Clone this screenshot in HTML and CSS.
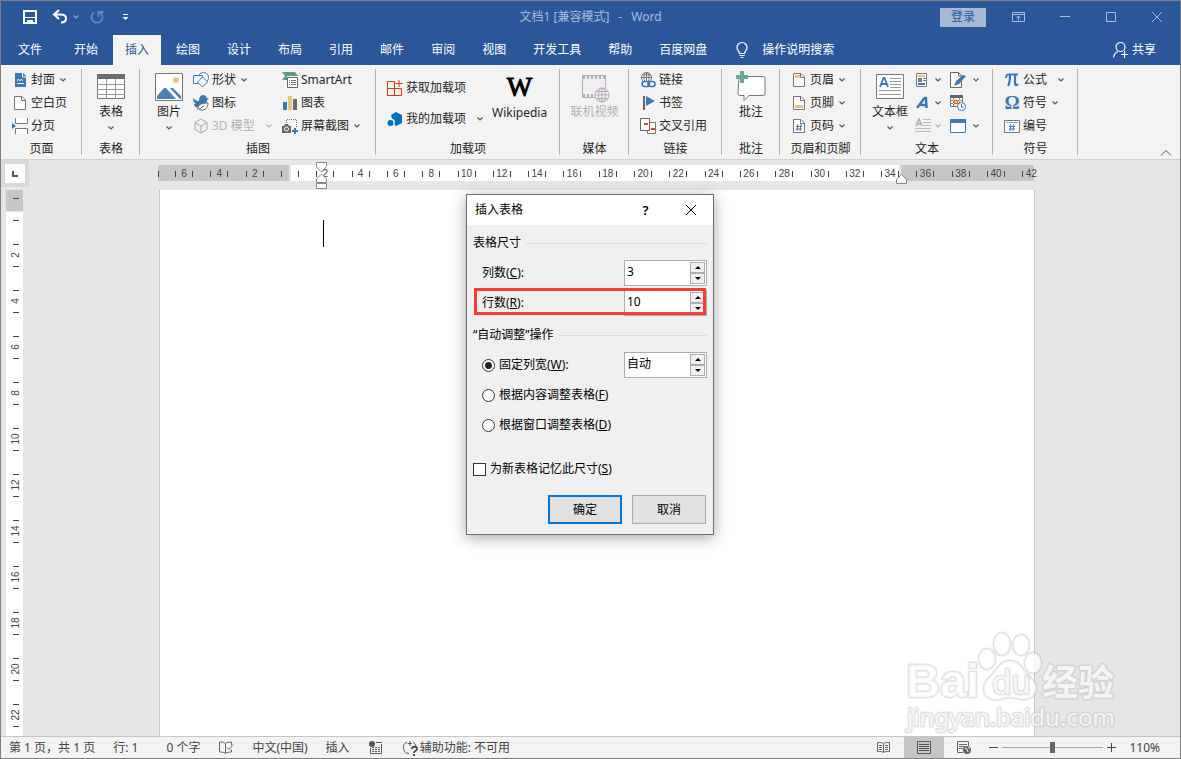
FILE: index.html
```html
<!DOCTYPE html>
<html lang="zh-CN">
<head>
    <meta charset="UTF-8">
    <meta name="viewport" content="width=device-width, initial-scale=1.0">
    <title>文档1 - Word</title>
    <link rel="stylesheet" href="styles.css">
</head>
<body>
    <svg class="defs" aria-hidden="true">
        <symbol id="chev" viewBox="0 0 8 8"><path d="M1.500 2.500l2.500 2.500 2.500-2.500" fill="none" stroke="currentColor" stroke-width="1.200"/></symbol>
        <symbol id="doc" viewBox="0 0 16 16"><path d="M2.500 1.500h7.500l3.500 3.500v9.500h-11z" fill="#fff" stroke="#777"/><path d="M9.500 1.500v4h4" fill="none" stroke="#777"/></symbol>
    </svg>

    <!-- Title bar -->
    <header class="titlebar">
        <div class="quick-access">
            <button aria-label="保存"><svg width="16" height="16"><path d="M2 2h12v12H2z" fill="none" stroke="#fff" stroke-width="2"/><path d="M3 8.500h10" stroke="#fff"/><path d="M5 11h6v4H9v-2H7v2H5z" fill="#fff"/></svg></button>
            <button aria-label="撤消" class="undo"><svg width="16" height="16"><path d="M7 1L2 5.500l5 4.500M2.500 5.500H9c3 0 5 1.500 5 4s-2 4-5 4" fill="none" stroke="#fff" stroke-width="2"/></svg><svg class="chev"><use href="#chev"/></svg></button>
            <button aria-label="恢复" class="redo"><svg width="16" height="16"><path d="M5 3.500A5.500 5.500 0 1 0 11 3.500M9.500 8V3h5" fill="none" stroke="#6384bb" stroke-width="2"/></svg></button>
            <button aria-label="自定义快速访问工具栏"><svg width="16" height="16"><path d="M5 5.500h5" stroke="#fff"/><path d="M4.500 8h6L7.500 11z" fill="#fff"/></svg></button>
        </div>
        <div class="doc-title"><span>文档1 [兼容模式]</span><span>-</span><span>Word</span></div>
        <div class="window-controls">
            <button class="signin">登录</button>
            <button aria-label="功能区显示选项"><svg width="14" height="12"><path d="M.5 1.500h12v9H.5zM.5 3.500h12M6.500 9.500v-4M4.500 7l2-2 2 2" fill="none" stroke="currentColor"/></svg></button>
            <button aria-label="最小化"><svg width="14" height="12"><path d="M2 5.500h10" stroke="currentColor"/></svg></button>
            <button aria-label="最大化"><svg width="14" height="12"><path d="M2.500 1.500h9v9h-9z" fill="none" stroke="currentColor"/></svg></button>
            <button aria-label="关闭"><svg width="14" height="12"><path d="M2 1l10 10M12 1L2 11" stroke="currentColor"/></svg></button>
        </div>
    </header>

    <!-- Tabs -->
    <nav class="tabs">
        <button class="tab file">文件</button>
        <button class="tab">开始</button>
        <button class="tab active">插入</button>
        <button class="tab">绘图</button>
        <button class="tab">设计</button>
        <button class="tab">布局</button>
        <button class="tab">引用</button>
        <button class="tab">邮件</button>
        <button class="tab">审阅</button>
        <button class="tab">视图</button>
        <button class="tab">开发工具</button>
        <button class="tab">帮助</button>
        <button class="tab">百度网盘</button>
        <button class="tab tell-me"><svg width="14" height="18"><path d="M4.500 12.500c0-2-2.500-3-2.500-6a4.800 4.800 0 0 1 10 0c0 3-2.500 4-2.500 6zM4.500 14.500h5M5.500 16.500h3" fill="none" stroke="#fff" stroke-width="1.200"/></svg>操作说明搜索</button>
        <button class="tab share"><svg width="18" height="18"><circle cx="8.500" cy="6" r="4.500" fill="none" stroke="#fff" stroke-width="1.200"/><path d="M1.500 16.500c.5-3 2-5 4.500-6M12.500 10v7M9 13.500h7" fill="none" stroke="#fff" stroke-width="1.200"/></svg>共享</button>
    </nav>

    <!-- Ribbon -->
    <section class="ribbon">
        <div class="group g-pages">
            <div class="group-body">
                <div class="col">
                    <button class="small"><svg class="icon"><path d="M3 1h8l3 3v11H3z" fill="#3d78b5"/><path d="M10.500 1v4H14" fill="none" stroke="#fff"/><path d="M5 8.500l1.500-1 1.500 1 1.500-1 1.500 1M5 11.500h7" fill="none" stroke="#fff"/></svg>封面<svg class="chev"><use href="#chev"/></svg></button>
                    <button class="small"><svg class="icon"><use href="#doc"/></svg>空白页</button>
                    <button class="small"><svg class="icon"><path d="M3.500 0v5.500h12V0M3.500 16v-5.500h12V16" fill="#fff" stroke="#777"/><path d="M0 5l4 3-4 3z" fill="#3d78b5"/></svg>分页</button>
                </div>
            </div>
            <div class="group-label">页面</div>
        </div>

        <div class="group g-table">
            <div class="group-body">
                <button class="big"><svg class="big-icon"><path d="M2.500 3.500h27v24h-27z" fill="#fff" stroke="#777"/><path d="M2 3h28v5H2z" fill="#6b6b6b"/><path d="M2 13.500h28M2 18.500h28M2 23.500h28M11.500 8v20M20.500 8v20" stroke="#999"/></svg><span>表格</span><svg class="chev"><use href="#chev"/></svg></button>
            </div>
            <div class="group-label">表格</div>
        </div>

        <div class="group g-illus">
            <div class="group-body">
                <button class="big"><svg class="big-icon"><path d="M2.500 2.500h27v27h-27z" fill="#fff" stroke="#777"/><circle cx="23" cy="9" r="3" fill="#eac282"/><path d="M4 28v-3l7-8h2l10 11z" fill="#4a82b8"/><path d="M17 17h3l8 8v3h-1z" fill="#4a82b8"/></svg><span>图片</span><svg class="chev"><use href="#chev"/></svg></button>
                <div class="col shapes">
                    <button class="small"><svg class="icon"><circle cx="10.500" cy="5.500" r="5" fill="#fff" stroke="#3d78b5"/><path d="M.5 3.500h9v8h-9z" fill="#fff" stroke="#3d78b5"/><path d="M9.500 5l5 5-5 5-5-5z" fill="#fff" stroke="#3d78b5"/></svg>形状<svg class="chev"><use href="#chev"/></svg></button>
                    <button class="small"><svg class="icon"><path d="M0 3c3 3 5 3 6 3 0-4 2-6 4-6s3 1 4 3l2 1-2 1c0 5-4 8-8 8-3 0-5-2-5-4l2 0C1 8 0 6 0 3z" fill="#3d78b5"/><path d="M5 15c-1-5 3-7 10-7 0 5-4 9-9 6l5-3" fill="#fff" stroke="#666"/></svg>图标</button>
                    <button class="small" disabled><svg class="icon"><path d="M8 1l6 3.500v7L8 15l-6-3.500v-7zM2 4.500L8 8l6-3.500M8 8v7" fill="#f3eef4" stroke="#a5a5a5"/></svg>3D 模型<svg class="chev"><use href="#chev"/></svg></button>
                </div>
                <div class="col">
                    <button class="small"><svg class="icon"><path d="M0 0h13l3 4H5v4H0l3-4z" fill="#5c9c86"/><path d="M5.500 5.500h10v10h-10z" fill="#fff" stroke="#666"/><path d="M7 8.500h1M7 10.500h1M7 12.500h1M9 8.500h5M9 10.500h5M9 12.500h5" stroke="#777"/></svg>SmartArt</button>
                    <button class="small"><svg class="icon"><path d="M1 7h4v8H1z" fill="#3d78b5"/><path d="M6 1h4v14H6z" fill="#eac282"/><path d="M11 4h4v11h-4z" fill="#6b6b6b"/></svg>图表</button>
                    <button class="small"><svg class="icon"><path d="M4.500 7V1.500h10V9" fill="none" stroke="#777" stroke-dasharray="1 1"/><path d="M0 8h2l1-2h3l1 2h2v7H0z" fill="#666"/><circle cx="4.500" cy="11" r="2" fill="none" stroke="#fff"/><path d="M13 10v6M10 13h6" stroke="#3d78b5" stroke-width="2"/></svg>屏幕截图<svg class="chev"><use href="#chev"/></svg></button>
                </div>
            </div>
            <div class="group-label">插图</div>
        </div>

        <div class="group g-addins">
            <div class="group-body">
                <div class="col two">
                    <button class="small"><svg class="icon"><path d="M.5 1.500h7v14h-7zM.5 8.500h14v7h-14zM7.500 8v7M12 0v7M8.500 3.500h7" fill="none" stroke="#d83b01"/></svg>获取加载项</button>
                    <button class="small"><svg class="icon"><path d="M9 1l6 3v8l-6 3-3-2-1-5-1-4z" fill="#0072c6"/><circle cx="4" cy="11.500" r="4" fill="#f3f3f3"/><circle cx="3.500" cy="12" r="3" fill="#0072c6"/></svg>我的加载项<svg class="chev"><use href="#chev"/></svg></button>
                </div>
                <button class="big wiki"><span class="wiki-w">W</span><span>Wikipedia</span></button>
            </div>
            <div class="group-label">加载项</div>
        </div>

        <div class="group g-media">
            <div class="group-body">
                <button class="big" disabled><svg class="big-icon"><path d="M4.500 4.500h23v22h-23z" fill="#f3eef4" stroke="#b0b0b0"/><path d="M5 6.500h23M5 24.500h12" stroke="#b0b0b0" stroke-width="3" stroke-dasharray="2 2"/><circle cx="24" cy="24" r="7" fill="#f3eef4" stroke="#b0b0b0"/><path d="M17 24h14M18 20.500h12M18 27.500h12M24 17v14" stroke="#b0b0b0"/><ellipse cx="24" cy="24" rx="3.500" ry="7" fill="none" stroke="#b0b0b0"/></svg><span>联机视频</span></button>
            </div>
            <div class="group-label">媒体</div>
        </div>

        <div class="group g-links">
            <div class="group-body">
                <div class="col">
                    <button class="small"><svg class="icon"><circle cx="6.500" cy="5.500" r="5" fill="#fff" stroke="#777"/><path d="M1 5.500h11M2 3h9M6.500 1v9" stroke="#777"/><ellipse cx="6.500" cy="5.500" rx="2.500" ry="5" fill="none" stroke="#777"/><rect x="2" y="9.500" width="7.500" height="5" rx="2.500" fill="#f3f3f3" stroke="#3d78b5" stroke-width="1.700"/><rect x="8" y="9.500" width="7" height="5" rx="2.500" fill="none" stroke="#3d78b5" stroke-width="1.700"/></svg>链接</button>
                    <button class="small"><svg class="icon"><path d="M4 1v14" stroke="#666" stroke-width="2"/><path d="M6 1l9 5-9 5z" fill="#3d78b5"/></svg>书签</button>
                    <button class="small"><svg class="icon"><path d="M7.500 4.500h8v11h-8z" fill="#fff" stroke="#777"/><path d="M.5.500h9v12h-9z" fill="#fff" stroke="#666"/><path d="M4 6h4M11 11h4" stroke="#d24726" stroke-width="2"/></svg>交叉引用</button>
                </div>
            </div>
            <div class="group-label">链接</div>
        </div>

        <div class="group g-comment">
            <div class="group-body">
                <button class="big"><svg class="big-icon"><path d="M4 5.500h24a2 2 0 0 1 2 2v15a2 2 0 0 1-2 2H14l-5 5v-5H5a2 2 0 0 1-2-2z" fill="#fff" stroke="#777"/><path d="M5 0h4v4h4v4H9v4H5V8H1V4h4z" fill="#6ea895"/></svg><span>批注</span></button>
            </div>
            <div class="group-label">批注</div>
        </div>

        <div class="group g-header">
            <div class="group-body">
                <div class="col">
                    <button class="small"><svg class="icon"><use href="#doc"/><path d="M4 3h5v3H4z" fill="#eac282"/></svg>页眉<svg class="chev"><use href="#chev"/></svg></button>
                    <button class="small"><svg class="icon"><use href="#doc"/><path d="M4 10h8v3H4z" fill="#eac282"/></svg>页脚<svg class="chev"><use href="#chev"/></svg></button>
                    <button class="small"><svg class="icon"><use href="#doc"/><path d="M7 6l-1 7M10 6l-1 7M5 8.500h6M5 11h6" stroke="#3d78b5"/></svg>页码<svg class="chev"><use href="#chev"/></svg></button>
                </div>
            </div>
            <div class="group-label">页眉和页脚</div>
        </div>

        <div class="group g-text">
            <div class="group-body">
                <button class="big"><svg class="big-icon"><path d="M2.500 3.500h27v24h-27z" fill="#fff" stroke="#777"/><path d="M6 16l3.500-9h1l3.500 9M7.500 13h5" fill="none" stroke="#3d78b5" stroke-width="1.800"/><path d="M16 7.500h11M16 10.500h11M16 13.500h11M16 16.500h11M5 19.500h22M5 23.500h22" stroke="#999"/></svg><span>文本框</span><svg class="chev"><use href="#chev"/></svg></button>
                <div class="col icons-only">
                    <button class="small" aria-label="文档部件"><svg class="icon"><path d="M1.500 1.500h10v13h-10z" fill="#fff" stroke="#777"/><path d="M3 3h7v2H3z" fill="#eac282"/><path d="M3 6h4v4H3z" fill="#777"/><path d="M8 6.500h3M8 8.500h3" stroke="#777"/><path d="M3 11h7v2H3z" fill="#3d78b5"/></svg><svg class="chev"><use href="#chev"/></svg></button>
                    <button class="small" aria-label="艺术字"><svg class="icon"><path d="M2 13L9.500 3H11l.5 10M5 10h6" fill="none" stroke="#3d78b5" stroke-width="2.500"/></svg><svg class="chev"><use href="#chev"/></svg></button>
                    <button class="small" aria-label="首字下沉" disabled><svg class="icon"><path d="M1 8l3-7 3 7M2 6h4" fill="none" stroke="#aaa" stroke-width="1.500"/><path d="M8 1.500h8M8 4.500h8M8 7.500h8M0 10.500h16M0 13.500h16" stroke="#bbb"/></svg><svg class="chev"><use href="#chev"/></svg></button>
                </div>
                <div class="col icons-only">
                    <button class="small" aria-label="签名行"><svg class="icon"><path d="M.5.500h8l3 3v12H.5z" fill="#fff" stroke="#666"/><path d="M8.500 0v4h3" fill="none" stroke="#666"/><path d="M4 14l2-5 7-6 3 1-7 8z" fill="#3d78b5"/></svg><svg class="chev"><use href="#chev"/></svg></button>
                    <button class="small" aria-label="日期和时间"><svg class="icon"><path d="M.5.500h12v11H.5z" fill="#fff" stroke="#777"/><path d="M0 0h13v3H0z" fill="#666"/><path d="M3.500 3v8M9.500 3v8M1 5.500h11M1 8.500h11" stroke="#888" stroke-dasharray="2 1"/><path d="M4.500 5.500h3v3h-3z" fill="#fff" stroke="#e8731a" stroke-width="1.500"/><circle cx="11.500" cy="11.500" r="4" fill="#fff" stroke="#3d78b5"/><path d="M11.500 9v3h2" fill="none" stroke="#3d78b5"/></svg></button>
                    <button class="small" aria-label="对象"><svg class="icon"><path d="M.5 1.500h15v13H.5z" fill="#fff" stroke="#3d78b5"/><path d="M0 1h16v4H0z" fill="#3d78b5"/></svg><svg class="chev"><use href="#chev"/></svg></button>
                </div>
            </div>
            <div class="group-label">文本</div>
        </div>

        <div class="group g-symbols">
            <div class="group-body">
                <div class="col">
                    <button class="small equation"><svg class="icon"><path d="M2 6c0-3 1-3.500 3-3.500h9" fill="none" stroke="#3d78b5" stroke-width="2"/><path d="M6 3c0 4 0 8-2 11M11 3v8c0 2 1 3 3 1" fill="none" stroke="#3d78b5" stroke-width="2.200"/></svg>公式<svg class="chev"><use href="#chev"/></svg></button>
                    <button class="small"><span class="glyph">Ω</span>符号<svg class="chev"><use href="#chev"/></svg></button>
                    <button class="small"><svg class="icon"><path d="M.5 2.500h15v12H.5z" fill="#fff" stroke="#777"/><path d="M2 4.500h2M5 4.500h9" stroke="#999"/><path d="M7 6l-1 7M10 6l-1 7M5 8.500h6M5 11h6" stroke="#3d78b5"/></svg>编号</button>
                </div>
            </div>
            <div class="group-label">符号</div>
        </div>

        <button class="collapse" aria-label="折叠功能区"><svg width="12" height="8"><path d="M1 6.500L6 1.500l5 5" fill="none" stroke="#555"/></svg></button>
    </section>

    <!-- Document area -->
    <main class="workspace">
        <div class="corner"><button aria-label="制表符"><svg width="8" height="8"><path d="M2 1v5h5" fill="none" stroke="#555" stroke-width="2"/></svg></button></div>
        <div class="ruler-row">
            <div class="h-ruler">
                <svg class="ruler-marks" id="hMarks"></svg>
                <svg class="indent left" width="12" height="29"><path d="M.5.500h10v4L6 9.500h-1L.5 5z" fill="#fff" stroke="#888"/><path d="M.5 20.500V17L5 12.500h1l4.500 4.500v3.500zM.5 21.500h10v5H.5z" fill="#fff" stroke="#888"/></svg>
                <svg class="indent right" width="12" height="12"><path d="M.5 9.500V5.500L5.500.5l5 5v4z" fill="#fff" stroke="#888"/></svg>
            </div>
        </div>
        <div class="v-ruler"><svg class="ruler-marks" id="vMarks"></svg></div>
        <div class="canvas">
            <article class="page"><span class="caret"></span></article>
        </div>

        <dialog class="dialog" open aria-labelledby="dlgTitle">
            <div class="dialog-title">
                <span id="dlgTitle">插入表格</span>
                <button aria-label="帮助">?</button>
                <button aria-label="关闭"><svg width="12" height="12"><path d="M1 1l10 10M11 1L1 11" stroke="#000"/></svg></button>
            </div>
            <form class="dialog-body">
                <div class="legend">表格尺寸</div>
                <div class="row">
                    <label for="cols">列数(<u>C</u>):</label>
                    <div class="spinner">
                        <input id="cols" type="text" value="3">
                        <div class="arrows"><button type="button" aria-label="增加"><i class="up"></i></button><button type="button" aria-label="减少"><i class="down"></i></button></div>
                    </div>
                </div>
                <div class="row marked">
                    <label for="rows">行数(<u>R</u>):</label>
                    <div class="spinner">
                        <input id="rows" type="text" value="10">
                        <div class="arrows"><button type="button" aria-label="增加"><i class="up"></i></button><button type="button" aria-label="减少"><i class="down"></i></button></div>
                    </div>
                </div>
                <div class="legend">“自动调整”操作</div>
                <div class="row">
                    <input type="radio" name="fit" id="fixed" checked>
                    <label for="fixed">固定列宽(<u>W</u>):</label>
                    <div class="spinner">
                        <input type="text" value="自动" aria-label="列宽">
                        <div class="arrows"><button type="button" aria-label="增加"><i class="up"></i></button><button type="button" aria-label="减少"><i class="down"></i></button></div>
                    </div>
                </div>
                <div class="row">
                    <input type="radio" name="fit" id="content">
                    <label for="content">根据内容调整表格(<u>F</u>)</label>
                </div>
                <div class="row">
                    <input type="radio" name="fit" id="window">
                    <label for="window">根据窗口调整表格(<u>D</u>)</label>
                </div>
                <div class="remember">
                    <input type="checkbox" id="remember">
                    <label for="remember">为新表格记忆此尺寸(<u>S</u>)</label>
                </div>
                <div class="actions">
                    <button type="button" class="ok">确定</button>
                    <button type="button">取消</button>
                </div>
            </form>
        </dialog>

        <svg class="watermark" width="220" height="108" aria-hidden="true">
            <text x="5" y="70" class="wm-bai">Bai</text>
            <ellipse cx="86" cy="32" rx="8" ry="10"/>
            <ellipse cx="101" cy="17" rx="8" ry="11"/>
            <ellipse cx="120" cy="18" rx="8" ry="10"/>
            <ellipse cx="132" cy="36" rx="8" ry="10"/>
            <path d="M109 34c7 0 10 4 14 10 5 7 13 10 12 18-1 9-9 11-15 10-8-2-14-2-21 0-8 2-15-2-16-9-1-8 6-12 10-17 4-6 8-12 16-12z"/>
            <text x="91" y="67" class="wm-du">du</text>
            <text x="141" y="69" class="wm-cn">经验</text>
            <text x="6" y="99" class="wm-url">jingyan.baidu.com</text>
        </svg>
    </main>

    <!-- Status bar -->
    <footer class="statusbar">
        <span>第 1 页，共 1 页</span>
        <span>行: 1</span>
        <span class="words">0 个字</span>
        <svg width="16" height="16"><path d="M7.500 13.500c-1-1-3-1.500-6-1.500V2c3 0 5 .5 6 1.500zM7.500 3.500c1-1 3-1.500 6-1.500v3M7.500 13.500c1-1 3-1.500 6-1.500V9.500M9 7.500l2 2 4-5" fill="none" stroke="#666"/></svg>
        <span>中文(中国)</span>
        <span>插入</span>
        <svg width="16" height="16"><circle cx="4" cy="4" r="3" fill="#555"/><path d="M8 2.500h6M2.500 8v5.500h11V4" fill="none" stroke="#555"/><path d="M4 7.500h9M4 9.500h9M4 11.500h9" stroke="#555" stroke-dasharray="2 1"/></svg>
        <span class="a11y"><svg width="18" height="16"><path d="M5 2a6 6 0 0 0 2 11.500M8 1v5M5.500 3.500H10M11 2a6 6 0 0 1 3 4" fill="none" stroke="#555"/><path d="M10 9c0-3 6-3 5 0 0 2-3 1.500-3 4M12 14v2" fill="none" stroke="#444" stroke-width="1.800"/></svg>辅助功能: 不可用</span>
        <div class="view-tools">
            <button aria-label="阅读视图"><svg width="16" height="16"><path d="M1.500 2.500c3 0 5 0 6 1 1-1 3-1 6-1v9c-3 0-5 0-6 1-1-1-3-1-6-1zM7.500 3v9M3 5.500h3M3 7.500h3M3 9.500h3M9 5.500h3M9 7.500h3M9 9.500h3" fill="none" stroke="#666"/></svg></button>
            <button aria-label="页面视图" class="active"><svg width="16" height="16"><path d="M1.500 1.500h13v12h-13zM3 4.500h10M3 6.500h10M3 8.500h10M3 10.500h10" fill="none" stroke="#555"/></svg></button>
            <button aria-label="Web 版式视图"><svg width="16" height="16"><path d="M7 12.500H1.500v-11h11V6M3 4.500h8M3 6.500h6M3 8.500h4" fill="none" stroke="#666"/><circle cx="11" cy="10" r="4" fill="#666"/><path d="M9 8l2 1 1 3M12 7l2 2" fill="none" stroke="#f3f3f3"/></svg></button>
        </div>
        <div class="zoom">
            <button aria-label="缩小"><svg width="9" height="9"><path d="M0 4.500h9" stroke="#444"/></svg></button>
            <input type="range" min="10" max="210" value="110" aria-label="缩放">
            <button aria-label="放大"><svg width="9" height="9"><path d="M0 4.500h9M4.500 0v9" stroke="#444"/></svg></button>
            <span class="percent">110%</span>
        </div>
    </footer>

    <script src="script.js"></script>
</body>
</html>
```
FILE: styles.css
```css
* {
    margin: 0;
    padding: 0;
    box-sizing: border-box;
}

html, body {
    height: 100%;
}

body {
    display: flex;
    flex-direction: column;
    border: 1px solid #7f7f7f;
    background-color: #e6e6e6;
    color: #262626;
    font-family: "Noto Sans", "Noto Sans CJK SC", sans-serif;
    font-size: 12px;
    line-height: 16px;
    overflow: hidden;
}

button, input {
    font: inherit;
    color: inherit;
}

button {
    display: flex;
    align-items: center;
    background: none;
    border: none;
    white-space: nowrap;
}

svg {
    flex: none;
    display: block;
}

.defs {
    position: absolute;
    width: 0;
    height: 0;
}

.chev {
    width: 8px;
    height: 8px;
    color: #555;
}

/* title bar */
.titlebar {
    display: grid;
    grid-template-columns: 1fr auto 1fr;
    align-items: center;
    height: 34px;
    padding-bottom: 2px;
    background-color: #2b579a;
    color: #a9bcd9;
}

.quick-access {
    display: flex;
    gap: 14px;
    padding-left: 21px;
}

.undo {
    gap: 4px;
}

.undo .chev {
    color: #8ba5cf;
}

.redo {
    margin: 0 -1px 0 -5px;
}

.doc-title {
    display: flex;
    gap: 9px;
}

.window-controls {
    display: flex;
    align-items: center;
    justify-content: flex-end;
    gap: 32px;
    padding-right: 16px;
}

.signin {
    justify-content: center;
    width: 46px;
    height: 19px;
    margin-right: -6px;
    background-color: #a6b8d4;
    color: #2b579a;
}

/* tabs */
.tabs {
    display: flex;
    gap: 3px;
    height: 30px;
    background-color: #2b579a;
}

.tab {
    padding: 0 12px;
    color: #fff;
}

.tab.file {
    padding: 0 17px;
}

.tab.active {
    background-color: #f3f3f3;
    color: #2b579a;
}

.tell-me {
    gap: 13px;
    margin-left: 1px;
}

.share {
    gap: 2px;
    margin-left: auto;
}

.tab.share {
    padding-right: 24px;
}

/* ribbon */
.ribbon {
    display: flex;
    padding-top: 3px;
    background-color: #f3f3f3;
    border-bottom: 1px solid #d0d0d0;
}

.group {
    position: relative;
    flex: none;
}

.group::after {
    content: '';
    position: absolute;
    top: 1px;
    right: 0;
    bottom: 4px;
    width: 1px;
    background-color: #b5b5b5;
}

.group-body {
    display: flex;
    height: 70px;
}

.group-label {
    height: 21px;
    line-height: 21px;
    text-align: center;
}

.g-pages { width: 81px; }
.g-table, .g-comment { width: 58px; }
.g-illus { width: 236px; }
.g-addins { width: 184px; }
.g-media { width: 69px; }
.g-links { width: 93px; }
.g-header { width: 81px; }
.g-text { width: 132px; }
.g-symbols { width: 85px; }

.g-pages .group-body,
.g-header .group-body,
.g-links .group-body,
.g-addins .group-body,
.g-symbols .group-body {
    padding-left: 11px;
}

.g-table .group-body,
.g-media .group-body,
.g-comment .group-body {
    justify-content: center;
}

.g-illus .group-body {
    gap: 7px;
    padding-left: 12px;
}

.g-text .group-body {
    gap: 7px;
    padding-left: 11px;
}

.col {
    display: flex;
    flex-direction: column;
}

.col.two {
    padding-top: 4px;
}

.col.two .small {
    height: 31px;
}

.small {
    gap: 3px;
    height: 23px;
}

.small .chev {
    margin-left: 1px;
}

.shapes {
    width: 82px;
}

.shapes .small:disabled .chev,
.two .small .chev,
.equation .chev {
    margin-left: 7px;
}

.icons-only .small .chev {
    margin-left: 0;
}

.icons-only + .icons-only {
    margin-left: 1px;
}

.icons-only + .icons-only .small .chev {
    margin-left: 3px;
}

.icon {
    width: 16px;
    height: 16px;
}

.glyph {
    width: 16px;
    color: #3d78b5;
    font-family: "Liberation Serif", serif;
    font-size: 19px;
    font-weight: bold;
    text-align: center;
}

.big {
    flex-direction: column;
    min-width: 34px;
    padding-top: 3px;
}

.big-icon {
    width: 32px;
    height: 32px;
}

.big span {
    line-height: 18px;
}

.big .chev {
    margin-top: 3px;
}

.wiki {
    margin-left: 8px;
}

.big .wiki-w {
    height: 33px;
    color: #000;
    font-family: "Liberation Serif", serif;
    font-size: 27px;
    line-height: 32px;
    -webkit-text-stroke: 1px #000;
}

button:disabled,
button:disabled .chev {
    color: #b1b1b1;
}

.collapse {
    align-self: flex-end;
    margin: 0 8px 2px auto;
}

/* document area */
.workspace {
    position: relative;
    flex: 1;
    display: grid;
    grid-template-columns: 28px 1fr;
    grid-template-rows: 30px 1fr;
    min-height: 0;
}

.corner {
    height: 27px;
    padding: 4px;
    background-color: #d9d9d9;
}

.corner button {
    justify-content: center;
    width: 20px;
    height: 19px;
    background-color: #fdfdfd;
}

.ruler-row {
    padding: 5px 0 0 129px;
}

.h-ruler {
    position: relative;
    width: 876px;
    height: 16px;
    background: linear-gradient(to right, #c6c6c6 131px, #e6e6e6 131px 133px, #fff 133px 741px, #e6e6e6 741px 743px, #c6c6c6 743px);
}

.v-ruler {
    width: 17px;
    margin-left: 5px;
    background: linear-gradient(to bottom, #c6c6c6 21px, #e6e6e6 21px 22px, #fff 22px);
    overflow: hidden;
}

.ruler-marks {
    width: 100%;
    height: 100%;
    overflow: visible;
    fill: #444;
    stroke: none;
    font-family: "Liberation Sans", sans-serif;
    font-size: 10px;
    text-anchor: middle;
}

.indent {
    position: absolute;
}

.indent.left {
    left: 158px;
    top: -3px;
}

.indent.right {
    left: 738px;
    top: 9px;
}

.canvas {
    display: flex;
    padding-left: 130px;
}

.page {
    width: 876px;
    padding: 30px 163px;
    background-color: #fff;
    border: solid #c6c6c6;
    border-width: 0 1px;
}

.caret {
    display: block;
    width: 1px;
    height: 27px;
    background-color: #000;
}

/* insert table dialog */
.dialog {
    position: absolute;
    top: 34px;
    left: 0;
    right: 1px;
    width: 248px;
    margin: 0 auto;
    background-color: #f0f0f0;
    border: 1px solid #6b6e72;
    box-shadow: 0 3px 14px rgba(0,0,0,0.35);
    color: #000;
}

.dialog-title {
    display: flex;
    align-items: center;
    height: 30px;
    padding-left: 8px;
    background-color: #fff;
}

.dialog-title span {
    flex: 1;
}

.dialog-title button {
    justify-content: center;
    width: 45px;
    height: 30px;
}

.dialog-title button:nth-of-type(1) {
    font-size: 13px;
    font-weight: 600;
}

.dialog-body {
    padding: 8px 6px 10px;
}

.legend {
    display: flex;
    align-items: center;
    gap: 5px;
    height: 20px;
    margin-bottom: 5px;
}

.legend::after {
    content: '';
    flex: 1;
    height: 1px;
    background-color: #dcdcdc;
}

.row {
    position: relative;
    display: flex;
    align-items: center;
    gap: 4px;
    height: 30px;
    padding-left: 9px;
}

.row + .legend {
    margin-top: 7px;
}

.marked::after {
    content: '';
    position: absolute;
    inset: 0 1px 3px;
    border: 3px solid #fe3a35;
}

.spinner {
    display: flex;
    width: 83px;
    height: 26px;
    margin-left: auto;
    padding: 1px;
    background-color: #fff;
    border: 1px solid #abadb3;
}

.spinner input {
    width: 64px;
    padding: 0 1px 2px;
    background: none;
    border: none;
    outline: none;
}

.arrows {
    display: flex;
    flex-direction: column;
    width: 15px;
}

.arrows button {
    flex: 1;
    justify-content: center;
    background-color: #f0f0f0;
    border: 1px solid #abadb3;
}

.up, .down {
    border: solid transparent;
    border-width: 0 3px;
}

.up {
    border-bottom: 3px solid #000;
}

.down {
    border-top: 3px solid #000;
}

input[type="radio"],
input[type="checkbox"] {
    appearance: none;
    width: 13px;
    height: 13px;
    background-color: #fff;
    border: 1px solid #333;
}

input[type="radio"] {
    border-radius: 50%;
}

input[type="radio"]:checked {
    background: radial-gradient(circle, #222 3px, #fff 4px);
}

.remember {
    display: flex;
    align-items: center;
    gap: 4px;
    height: 20px;
    margin-top: 19px;
}

.actions {
    display: flex;
    justify-content: flex-end;
    gap: 10px;
    margin: 16px 1px 0 0;
}

.actions button {
    justify-content: center;
    width: 74px;
    height: 29px;
    background-color: #e1e1e1;
    border: 1px solid #adadad;
}

.actions .ok {
    border: 2px solid #0078d7;
}

/* watermark */
.watermark {
    position: absolute;
    right: 59px;
    bottom: 1px;
    overflow: visible;
    fill: rgba(255,255,255,0.75);
    stroke: rgba(190,190,190,0.45);
    stroke-width: 3px;
    stroke-linejoin: round;
    paint-order: stroke;
    pointer-events: none;
}

.wm-bai {
    font: bold 47px "Liberation Sans", sans-serif;
}

.wm-du {
    font: 32px "Open Sans", sans-serif;
}

.wm-cn {
    font: bold 36px "Noto Sans CJK SC", sans-serif;
}

.wm-url {
    font: 24px "Noto Sans", sans-serif;
}

/* status bar */
.statusbar {
    display: flex;
    align-items: center;
    gap: 18px;
    height: 22px;
    padding-left: 8px;
    background-color: #f3f3f3;
    border-top: 1px solid #c6c6c6;
    color: #444;
    white-space: nowrap;
}

.words {
    margin-left: 10px;
}

.a11y {
    display: flex;
}

.view-tools {
    display: flex;
    align-self: stretch;
    margin-left: auto;
}

.view-tools button {
    justify-content: center;
    width: 40px;
}

.view-tools .active {
    background-color: #c6c6c6;
}

.zoom {
    display: flex;
    align-items: center;
    gap: 4px;
    margin-left: -13px;
    padding-right: 20px;
}

.zoom input {
    appearance: none;
    width: 101px;
    height: 12px;
    background: linear-gradient(#a6a6a6, #a6a6a6) center / 100% 1px no-repeat;
}

.zoom input::-webkit-slider-thumb {
    appearance: none;
    width: 5px;
    height: 11px;
    background-color: #666;
}

.percent {
    margin-left: 9px;
}
```
FILE: script.js
```js
const NS = 'http://www.w3.org/2000/svg';

function add(parent, name, attrs, text) {
    const el = document.createElementNS(NS, name);
    for (const key in attrs) el.setAttribute(key, attrs[key]);
    if (text !== undefined) el.textContent = text;
    parent.appendChild(el);
}

// horizontal ruler: one label every two characters, a tick on each side
const h = document.getElementById('hMarks');
for (let n = -8; n <= 42; n += 2) {
    const x = 132 + n * 17.65;
    if (n > -8 && n !== 0) add(h, 'text', { x: x, y: 12 }, Math.abs(n));
    if (n > -8) add(h, 'rect', { x: Math.round(x - 9), y: 6, width: 1, height: 6 });
    if (n < 42) add(h, 'rect', { x: Math.max(0, Math.round(x + 8)), y: 6, width: 1, height: 6 });
}

// vertical ruler
const v = document.getElementById('vMarks');
for (let n = 0; n <= 22; n += 2) {
    const y = 19 + n * 23;
    if (n > 0) add(v, 'text', { transform: 'translate(13 ' + y + ') rotate(-90)' }, n);
    add(v, 'rect', { x: 7, y: y - 11, width: 6, height: 1 });
    add(v, 'rect', { x: 7, y: y + 11, width: 6, height: 1 });
}
```
